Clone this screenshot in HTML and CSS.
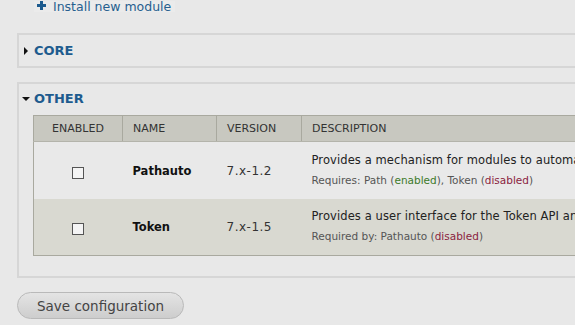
FILE: index.html
```html
<!DOCTYPE html>
<html>
<head>
<meta charset="utf-8">
<link rel="stylesheet" href="styles.css">
</head>
<body>
<div class="page">
  <div class="actions">
    <a class="action-link" href="#"><span class="plus"></span>Install new module</a>
  </div>
  <div class="fieldset collapsed">
    <div class="legend"><span class="arrow arrow-right"></span>CORE</div>
  </div>
  <div class="fieldset">
    <div class="legend"><span class="arrow arrow-down"></span>OTHER</div>
    <table class="modules">
      <colgroup>
        <col class="w-enabled">
        <col class="w-name">
        <col class="w-version">
        <col class="w-desc">
      </colgroup>
      <thead>
        <tr>
          <th class="col-enabled">ENABLED</th>
          <th>NAME</th>
          <th>VERSION</th>
          <th>DESCRIPTION</th>
        </tr>
      </thead>
      <tbody>
        <tr class="odd">
          <td class="cell-check"><span class="checkbox"></span></td>
          <td class="cell-name">Pathauto</td>
          <td class="cell-version">7.x-1.2</td>
          <td class="cell-desc">
            <div class="desc-text">Provides a mechanism for modules to automatically generate aliases for the content they manage.</div>
            <div class="desc-req">Requires: Path (<span class="ok">enabled</span>), Token (<span class="bad">disabled</span>)</div>
          </td>
        </tr>
        <tr class="even">
          <td class="cell-check"><span class="checkbox"></span></td>
          <td class="cell-name">Token</td>
          <td class="cell-version">7.x-1.5</td>
          <td class="cell-desc">
            <div class="desc-text">Provides a user interface for the Token API and some missing core tokens.</div>
            <div class="desc-req">Required by: Pathauto (<span class="bad">disabled</span>)</div>
          </td>
        </tr>
      </tbody>
    </table>
  </div>
  <button class="button" type="button">Save configuration</button>
</div>
</body>
</html>
```

FILE: styles.css
```css
html, body {
  margin: 0;
  padding: 0;
  overflow: hidden;
  background: #e8e8e8;
}
body {
  font-family: "DejaVu Sans", sans-serif;
  color: #333;
}
.page {
  padding-left: 17px;
  width: 640px;
}
.actions {
  height: 14px;
  line-height: 11px;
  margin-top: -1px;
  margin-bottom: 20px;
  padding-left: 17px;
}
.action-link {
  display: inline-flex;
  align-items: center;
  color: #265f8f;
  text-decoration: none;
  font-size: 12.5px;
  padding: 0 4px 0 3px;
  background: #ebebeb;
}
.plus {
  position: relative;
  display: inline-block;
  width: 9px;
  height: 9px;
  margin-right: 7px;
  margin-top: -2px;
}
.plus::before,
.plus::after {
  content: "";
  position: absolute;
  background: #1d5b8e;
}
.plus::before {
  left: 0;
  top: 3px;
  width: 9px;
  height: 3px;
}
.plus::after {
  left: 3px;
  top: 0;
  width: 3px;
  height: 9px;
}
.fieldset {
  border: 2px solid #d6d6d6;
  border-right: none;
  padding: 8px 0 7px 0;
  margin-bottom: 14px;
}
.fieldset + .fieldset {
  padding-top: 7px;
  padding-bottom: 20px;
  margin-bottom: 14px;
}
.legend {
  height: 16px;
  line-height: 16px;
  font-size: 13px;
  font-weight: bold;
  color: #1d5b8e;
  display: flex;
  align-items: center;
  padding-left: 4px;
}
.arrow {
  width: 0;
  height: 0;
}
.arrow-right {
  border-top: 4px solid transparent;
  border-bottom: 4px solid transparent;
  border-left: 4px solid #111;
  margin-left: 1px;
  margin-right: 6px;
}
.arrow-down {
  border-left: 4px solid transparent;
  border-right: 4px solid transparent;
  border-top: 4px solid #111;
  margin-left: -1px;
  margin-right: 4px;
}
.modules {
  margin: 8px 0 0 14px;
  border-collapse: collapse;
  border: 1px solid #a9a99f;
  table-layout: fixed;
  width: 620px;
}
.w-enabled { width: 89px; }
.w-name { width: 94px; }
.w-version { width: 85px; }
.modules th {
  background: #c8c8c0;
  font-weight: normal;
  font-size: 11px;
  color: #333;
  text-align: left;
  height: 25px;
  padding: 0 0 0 10px;
  border-left: 1px solid #a9a99f;
  border-bottom: 1px solid #b4b4ab;
}
.modules th.col-enabled {
  text-align: center;
  padding: 0;
  border-left: none;
}
.modules td {
  padding: 0 0 0 10px;
  vertical-align: middle;
}
.modules tr.odd td {
  background: #e9e9e9;
  height: 57px;
}
.modules tr.even td {
  background: #d9d9d1;
  height: 56px;
}
.modules td.cell-check {
  text-align: center;
  padding: 0;
}
.checkbox {
  display: inline-block;
  width: 10px;
  height: 10px;
  border: 1px solid #555;
  background: #f4f4f4;
  vertical-align: middle;
  margin-top: 2px;
}
.cell-name {
  font-weight: bold;
  font-size: 11.5px;
  color: #111;
}
.cell-version {
  font-size: 12px;
  color: #333;
  letter-spacing: 0.5px;
}
.cell-desc {
  white-space: nowrap;
  overflow: hidden;
}
.desc-text {
  font-size: 11.5px;
  letter-spacing: 0.1px;
  color: #222;
  line-height: 13px;
  margin-top: -2px;
}
.desc-req {
  font-size: 10.5px;
  color: #555;
  margin-top: 7px;
  line-height: 12px;
}
.ok { color: #3d7a2a; }
.bad { color: #8b1e3f; }
.button {
  display: block;
  width: 167px;
  height: 27px;
  border: 1px solid #b9b9b9;
  border-radius: 14px;
  background: linear-gradient(#e4e4e4, #cdcdcd);
  font-family: "DejaVu Sans", sans-serif;
  font-size: 13.5px;
  color: #444;
  padding: 0;
}
```
